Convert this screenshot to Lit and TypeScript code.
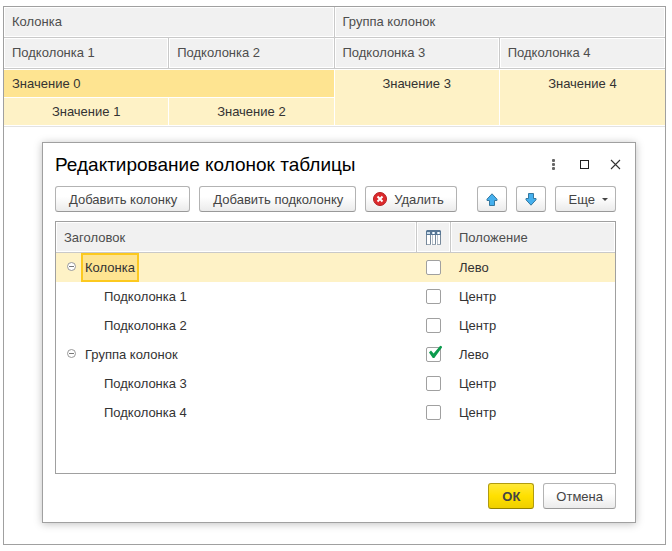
import { LitElement, html, css, svg, nothing } from "lit";
import { customElement, property, state } from "lit/decorators.js";
import { classMap } from "lit/directives/class-map.js";

interface ColumnRow {
  title: string;
  group: boolean;
  grouped: boolean;
  position: string;
}

const closeIcon = svg`<path d="M1 1L10 10M10 1L1 10" fill="none" stroke="#333" stroke-width="1.1"/>`;

@customElement("values-table")
export class ValuesTable extends LitElement {
  static styles = css`
    :host {
      display: block;
    }
    table {
      width: 100%;
      table-layout: fixed;
      border-collapse: separate;
      border-spacing: 0;
      border-bottom: 1px solid #e3e3e3;
    }
    th,
    td {
      box-sizing: border-box;
      padding: 0 8px;
      font-weight: normal;
      vertical-align: top;
    }
    th {
      height: 31px;
      line-height: 29px;
      text-align: left;
      color: #4d4d4d;
      background: #f1f1f1;
      border-right: 1px solid #c9c9c9;
      border-bottom: 1px solid #c9c9c9;
      box-shadow: inset 0 0 0 1px #fff;
    }
    td {
      height: 28px;
      line-height: 27px;
      text-align: center;
      color: #333;
      background: #fef2c6;
      border-right: 1px solid #fff;
      border-bottom: 1px solid #fff;
    }
    .first td {
      height: 29px;
      border-top: 1px solid #fff;
    }
    .last {
      border-right: 0;
    }
    .first .current {
      text-align: left;
      background: #fee491;
    }
  `;

  render() {
    return html`
      <table>
        <thead>
          <tr>
            <th colspan="2" scope="colgroup">Колонка</th>
            <th class="last" colspan="2" scope="colgroup">Группа колонок</th>
          </tr>
          <tr>
            <th scope="col">Подколонка 1</th>
            <th scope="col">Подколонка 2</th>
            <th scope="col">Подколонка 3</th>
            <th class="last" scope="col">Подколонка 4</th>
          </tr>
        </thead>
        <tbody>
          <tr class="first">
            <td class="current" colspan="2">Значение 0</td>
            <td rowspan="2">Значение 3</td>
            <td class="last" rowspan="2">Значение 4</td>
          </tr>
          <tr>
            <td>Значение 1</td>
            <td>Значение 2</td>
          </tr>
        </tbody>
      </table>
    `;
  }
}

@customElement("columns-tree")
export class ColumnsTree extends LitElement {
  @property({ attribute: false }) rows: ColumnRow[] = [];
  @state() private selected = 0;

  static styles = css`
    :host {
      display: block;
      padding-bottom: 46px;
      border: 1px solid #a0a0a0;
      background: #fff;
    }
    table {
      width: 100%;
      table-layout: fixed;
      border-collapse: separate;
      border-spacing: 0;
    }
    .flag-col {
      width: 34px;
    }
    .position-col {
      width: 164px;
    }
    th,
    td {
      box-sizing: border-box;
      padding: 0 8px;
      font-weight: normal;
      text-align: left;
      vertical-align: middle;
    }
    th {
      height: 31px;
      line-height: 29px;
      color: #4d4d4d;
      background: #f1f1f1;
      border-right: 1px solid #c9c9c9;
      border-bottom: 1px solid #c9c9c9;
      box-shadow: inset 0 0 0 1px #fff;
    }
    th:last-child {
      border-right: 0;
    }
    td {
      height: 29px;
      color: #333;
    }
    .selected td {
      background: #fef2c6;
    }
    th.flag,
    td.flag {
      padding: 0;
      text-align: center;
    }
    td.flag {
      padding-right: 1px;
    }
    .flag svg,
    .flag input {
      display: block;
      margin: 0 auto;
    }
    .name {
      display: flex;
      align-items: center;
      gap: 3px;
    }
    .child {
      padding-left: 36px;
    }
    .label {
      box-sizing: border-box;
      height: 29px;
      padding: 0 4px;
      line-height: 29px;
    }
    .selected .label {
      padding: 0 2px;
      border: 2px solid #fcc91f;
      background: #fee491;
      line-height: 25px;
    }
    .toggle {
      display: block;
      width: 13px;
      height: 13px;
      padding: 0;
      border: 0;
      background: none;
    }
    .toggle svg {
      display: block;
    }
    .group {
      padding-left: 1px;
    }
    input {
      appearance: none;
      width: 15px;
      height: 15px;
      border: 1px solid #a0a0a0;
      border-radius: 2px;
      background: #fff;
    }
    .box {
      position: relative;
      width: 15px;
      margin: 0 auto;
    }
    .box svg {
      position: absolute;
      left: 2px;
      top: -2px;
      pointer-events: none;
    }
  `;

  private toggleFlag(index: number) {
    this.rows = this.rows.map((row, i) =>
      i === index ? { ...row, grouped: !row.grouped } : row
    );
  }

  private renderRow(row: ColumnRow, index: number) {
    const selected = index === this.selected;
    return html`
      <tr class=${classMap({ selected })} @click=${() => (this.selected = index)}>
        <td>
          <div class=${classMap({ name: true, group: row.group, child: !row.group })}>
            ${row.group
              ? html`<button class="toggle" aria-label="Свернуть">
                  <svg width="13" height="13" viewBox="0 0 13 13">
                    <circle cx="6.5" cy="5.5" r="4" fill="#fff" stroke="#999" />
                    <path d="M4 5.5h5" stroke="#777" />
                  </svg>
                </button>`
              : nothing}
            <span class="label">${row.title}</span>
          </div>
        </td>
        <td class="flag">
          <div class="box">
            <input
              type="checkbox"
              aria-label=${`Группировать: ${row.title}`}
              .checked=${row.grouped}
              @change=${() => this.toggleFlag(index)}
            />
            ${row.grouped
              ? html`<svg width="15" height="15" viewBox="0 0 15 15">
                  <path d="M1 7.5L3 5.5L5.6 8.6L12.2 .8L14 1.4V2.6L6.3 13H4.8Z" fill="#0b9b4d" />
                </svg>`
              : nothing}
          </div>
        </td>
        <td>${row.position}</td>
      </tr>
    `;
  }

  render() {
    return html`
      <table>
        <colgroup>
          <col />
          <col class="flag-col" />
          <col class="position-col" />
        </colgroup>
        <thead>
          <tr>
            <th scope="col">Заголовок</th>
            <th scope="col" class="flag" aria-label="Группа">
              <svg width="15" height="15" viewBox="0 0 15 15">
                <path d="M1 5h13v10H1Z" fill="#fff" />
                <path d="M.5 5V15M4.5 5V15M9.5 5V15M14.5 5V15" stroke="#76889a" />
                <path d="M6.5 5V15M11.5 5V15" stroke="#b9c3cc" />
                <path d="M1 14.5h4M6 14.5h4M11 14.5h4" stroke="#9aa7b4" />
                <path d="M1 0h13l1 1v4H0V1Z" fill="#587795" />
                <path d="M1 2h3v2H1zM6 2h3v2H6zM11 2h3v2h-3z" fill="#c9dcec" />
                <path d="M7 2h1v2H7zM12 2h1v2h-1z" fill="#fff" />
              </svg>
            </th>
            <th scope="col">Положение</th>
          </tr>
        </thead>
        <tbody>
          ${this.rows.map((row, index) => this.renderRow(row, index))}
        </tbody>
      </table>
    `;
  }
}

@customElement("app-root")
export class AppRoot extends LitElement {
  private rows: ColumnRow[] = [
    { title: "Колонка", group: true, grouped: false, position: "Лево" },
    { title: "Подколонка 1", group: false, grouped: false, position: "Центр" },
    { title: "Подколонка 2", group: false, grouped: false, position: "Центр" },
    { title: "Группа колонок", group: true, grouped: true, position: "Лево" },
    { title: "Подколонка 3", group: false, grouped: false, position: "Центр" },
    { title: "Подколонка 4", group: false, grouped: false, position: "Центр" },
  ];

  static styles = css`
    :host {
      display: block;
      box-sizing: border-box;
      min-height: 100vh;
      padding: 6px 6px 6px 3px;
      background: #fff;
      font: 13px "Liberation Sans", Arial, sans-serif;
    }
    .frame {
      border: 1px solid #a0a0a0;
    }
    .dialog {
      margin: 15px 29px 21px 38px;
      padding: 0 19px 13px 12px;
      border: 1px solid #a0a0a0;
      background: #fff;
      box-shadow: 0 1px 8px rgba(0, 0, 0, 0.25);
    }
    .titlebar {
      display: flex;
      align-items: center;
      height: 43px;
      margin-right: -15px;
    }
    h1 {
      flex: 1;
      margin: 0;
      font-size: 19px;
      font-weight: normal;
      line-height: 41px;
      color: #000;
    }
    .window-button {
      display: flex;
      align-items: center;
      justify-content: center;
      width: 31px;
      height: 41px;
      padding: 0;
      border: 0;
      background: none;
    }
    .titlebar,
    .toolbar,
    .footer {
      white-space: nowrap;
    }
    .toolbar,
    .footer {
      display: flex;
      gap: 9px;
    }
    .toolbar {
      margin-bottom: 9px;
    }
    .footer {
      justify-content: flex-end;
      margin-top: 9px;
    }
    .button {
      display: flex;
      align-items: center;
      justify-content: center;
      box-sizing: border-box;
      height: 26px;
      padding: 0 12px 0 13px;
      border: 1px solid #b3b3b3;
      border-bottom-color: #999;
      border-radius: 3px;
      background: linear-gradient(#fff 40%, #ebebeb);
      color: #444;
      font: inherit;
    }
    .delete {
      gap: 7px;
      padding: 0 12px 0 7px;
    }
    .arrow {
      width: 30px;
      padding: 0;
    }
    .move {
      margin-left: auto;
    }
    .more {
      gap: 7px;
      padding: 0 7px 0 13px;
    }
    .ok {
      padding: 0 13px;
      border-color: #b09b10;
      border-bottom-color: #948200;
      background: linear-gradient(#ffe838, #ffe000 50%, #efcf00);
      font-weight: bold;
    }
    .cancel {
      padding: 0 12px;
    }
  `;

  render() {
    return html`
      <main class="frame">
        <values-table></values-table>
        <section class="dialog" role="dialog" aria-labelledby="dialog-title">
          <header class="titlebar">
            <h1 id="dialog-title">Редактирование колонок таблицы</h1>
            <button class="window-button" aria-label="Меню">
              <svg width="3" height="11" viewBox="0 0 3 11">
                <rect width="3" height="3" rx="1" fill="#666" />
                <rect y="4" width="3" height="3" rx="1" fill="#666" />
                <rect y="8" width="3" height="3" rx="1" fill="#666" />
              </svg>
            </button>
            <button class="window-button" aria-label="Развернуть">
              <svg width="9" height="9" viewBox="0 0 9 9">
                <rect x=".5" y=".5" width="8" height="8" fill="none" stroke="#222" />
              </svg>
            </button>
            <button class="window-button" aria-label="Закрыть">
              <svg width="11" height="11" viewBox="0 0 11 11">${closeIcon}</svg>
            </button>
          </header>
          <div class="toolbar">
            <button class="button">Добавить колонку</button>
            <button class="button">Добавить подколонку</button>
            <button class="button delete">
              <svg width="14" height="14" viewBox="0 0 14 14">
                <circle cx="7" cy="7" r="6.5" fill="#dc2a2d" stroke="#b31f22" />
                <path d="M4.5 4.5l5 5M9.5 4.5l-5 5" stroke="#fff" stroke-width="2" />
              </svg>
              Удалить
            </button>
            <button class="button arrow move" aria-label="Вверх">
              <svg width="12" height="13" viewBox="0 0 12 13">
                <path d="M6 .8L11 6.2V7.5H8.5V12.5H3.5V7.5H1V6.2Z" fill="#45b0ee" stroke="#35789f" />
              </svg>
            </button>
            <button class="button arrow" aria-label="Вниз">
              <svg width="12" height="13" viewBox="0 0 12 13">
                <path d="M6 12.2L11 6.8V5.5H8.5V.5H3.5V5.5H1V6.8Z" fill="#45b0ee" stroke="#35789f" />
              </svg>
            </button>
            <button class="button more">
              Еще
              <svg width="6" height="3" viewBox="0 0 6 3"><path d="M0 0h6L3 3Z" fill="#444" /></svg>
            </button>
          </div>
          <columns-tree .rows=${this.rows}></columns-tree>
          <footer class="footer">
            <button class="button ok">ОК</button>
            <button class="button cancel">Отмена</button>
          </footer>
        </section>
      </main>
    `;
  }
}
